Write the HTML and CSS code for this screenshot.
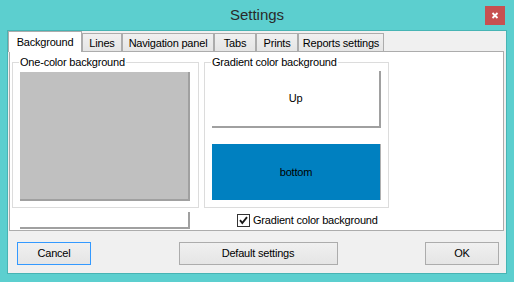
FILE: index.html
```html
<!DOCTYPE html>
<html lang="en">
<head>
<meta charset="utf-8">
<title>Settings</title>
<link rel="stylesheet" href="styles.css">
</head>
<body>
<div class="window">
  <header class="titlebar">
    <span class="titlebar__spacer"></span>
    <h1 class="titlebar__title">Settings</h1>
    <button class="titlebar__close" type="button" aria-label="Close">
      <svg width="20" height="19" viewBox="0 0 20 19"><path d="M7.5 7 L12.5 12 M12.5 7 L7.5 12" stroke="#fff" stroke-width="1.8" fill="none"/></svg>
    </button>
  </header>
  <main class="client">
    <nav class="tabs">
      <div class="tab tab--active tab--bg">Background</div>
      <div class="tab tab--lines">Lines</div>
      <div class="tab tab--nav">Navigation panel</div>
      <div class="tab tab--tabs">Tabs</div>
      <div class="tab tab--prints">Prints</div>
      <div class="tab tab--reports">Reports settings</div>
    </nav>
    <section class="pane">
      <div class="col col--left">
        <fieldset class="group group--left">
          <legend class="group__legend">One-color background</legend>
          <div class="swatch"></div>
        </fieldset>
        <div class="subbox"></div>
      </div>
      <div class="col col--right">
        <fieldset class="group group--right">
          <legend class="group__legend">Gradient color background</legend>
          <div class="colorbox colorbox--up">Up</div>
          <div class="colorbox colorbox--bottom">bottom</div>
        </fieldset>
        <label class="check">
          <span class="check__box"><svg width="11" height="11" viewBox="0 0 11 11"><path d="M2 5.2 L4.3 8 L9 2.2" stroke="#1a1a1a" stroke-width="1.9" fill="none"/></svg></span>
          <span class="check__label">Gradient color background</span>
        </label>
      </div>
    </section>
    <footer class="buttons">
      <button class="btn btn--cancel" type="button">Cancel</button>
      <button class="btn btn--default" type="button">Default settings</button>
      <button class="btn btn--ok" type="button">OK</button>
    </footer>
  </main>
</div>
</body>
</html>
```
FILE: styles.css
```css
* { box-sizing: border-box; }
html, body { margin: 0; padding: 0; }
body {
  background: #5ccfcf;
  font-family: "Liberation Sans", Arial, sans-serif;
  font-size: 11px;
  line-height: 13px;
  letter-spacing: -0.2px;
  color: #000;
}
.window {
  width: 514px;
  height: 282px;
  display: flex;
  flex-direction: column;
}
.titlebar {
  height: 30px;
  display: grid;
  grid-template-columns: 1fr auto 1fr;
  align-items: start;
}
.titlebar__title {
  margin: 0;
  font-weight: normal;
  font-size: 15px;
  line-height: 30px;
  letter-spacing: 0;
  color: #2a2a2a;
}
.titlebar__close {
  justify-self: end;
  margin: 6px 9px 0 0;
  width: 20px;
  height: 19px;
  padding: 0;
  border: 0;
  background: #c75050;
  display: block;
}
.titlebar__close svg { display: block; }

.client {
  margin: 0 7px 0 7px;
  height: 244px;
  border: 1px solid #47b4b4;
  background: #f0f0f0;
  display: flex;
  flex-direction: column;
}
.tabs {
  display: flex;
  height: 21px;
  align-items: flex-start;
}
.tab {
  height: 18px;
  margin-top: 2px;
  border: 1px solid #acacac;
  border-bottom: 0;
  padding-top: 3px;
  text-align: center;
  white-space: nowrap;
  background: linear-gradient(#f0f0f0, #e5e5e5);
}
.tab--active {
  position: relative;
  z-index: 1;
  margin-top: 0;
  height: 21px;
  padding-top: 4px;
  background: #fff;
}
.tab--bg { width: 74px; }
.tab--lines { width: 40px; }
.tab--nav { width: 92px; }
.tab--tabs { width: 42px; }
.tab--prints { width: 42px; }
.tab--reports { width: 86px; }

.pane {
  margin: -1px 2px 0 1px;
  height: 180px;
  border: 1px solid #acacac;
  background: #fff;
  padding: 4px 0 0 2px;
  display: flex;
  gap: 5px;
}
.col { display: flex; flex-direction: column; }
.col--left { width: 187px; }
.col--right { width: 185px; }

.group {
  margin: 0;
  border: 1px solid #dcdcdc;
  min-inline-size: 0;
}
.group--left { padding: 3px 7px 6px 7px; }
.group--right { padding: 2px 7px 7px 7px; }
.group__legend {
  padding: 0 1px;
  margin-left: -1px;
  font-size: 11px;
  line-height: 13px;
}
.swatch {
  width: 170px;
  height: 129px;
  background: #c0c0c0;
  border-right: 2px solid #a0a0a0;
  border-bottom: 2px solid #a0a0a0;
}
.subbox {
  margin: 4px 0 0 8px;
  width: 170px;
  height: 17px;
  background: #fff;
  border-right: 2px solid #a0a0a0;
  border-bottom: 2px solid #a0a0a0;
}
.colorbox {
  width: 169px;
  display: flex;
  align-items: center;
  justify-content: center;
  border-right: 2px solid #a0a0a0;
  border-bottom: 2px solid #a0a0a0;
}
.colorbox--up {
  height: 57px;
  background: #fff;
}
.colorbox--bottom {
  margin-top: 16px;
  height: 56px;
  background: #0080c0;
  border-bottom: 0;
  border-right: 1px solid #b0b0b0;
}
.check {
  margin: 6px 0 0 33px;
  display: flex;
  align-items: center;
  gap: 3px;
  height: 13px;
}
.check__box {
  width: 13px;
  height: 13px;
  border: 1px solid #333;
  background: #fff;
  display: block;
}
.check__box svg { display: block; }
.check__label { white-space: nowrap; }

.buttons {
  margin-top: 11px;
  padding: 0 7px 0 9px;
  display: flex;
  justify-content: space-between;
}
.btn {
  height: 23px;
  padding: 0;
  border: 1px solid #acacac;
  background: linear-gradient(#f0f0f0, #e5e5e5);
  font-family: "Liberation Sans", Arial, sans-serif;
  font-size: 11px;
  line-height: 13px;
  letter-spacing: -0.2px;
  color: #000;
}
.btn--cancel { width: 74px; border-color: #3399ff; }
.btn--default { width: 159px; }
.btn--ok { width: 74px; }
```
